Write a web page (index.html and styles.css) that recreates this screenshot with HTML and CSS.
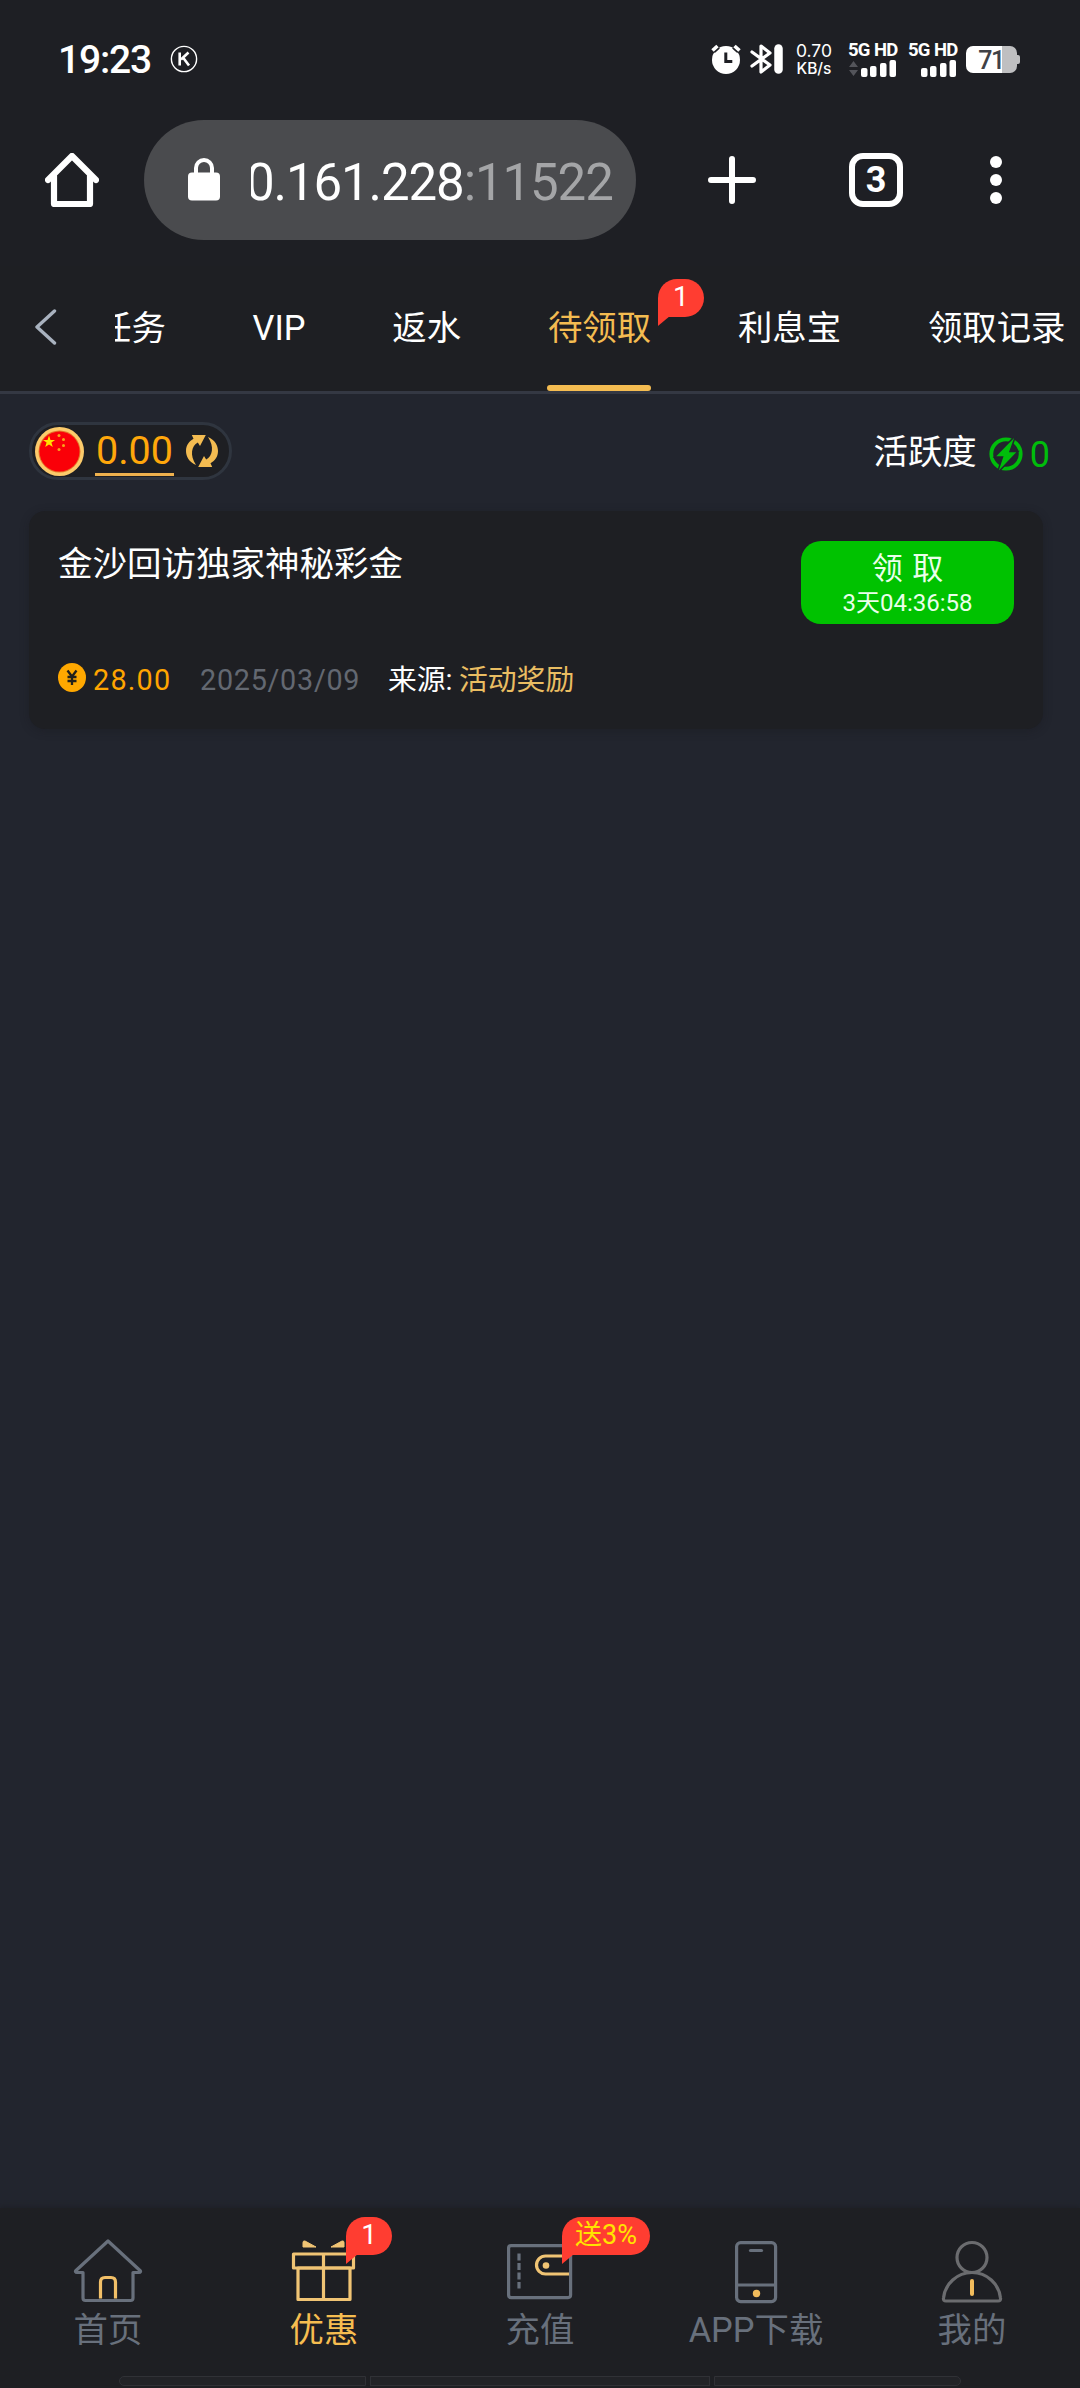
FILE: index.html
```html
<!DOCTYPE html>
<html lang="zh-CN">
<head>
<meta charset="utf-8">
<title>待领取</title>
<link rel="stylesheet" href="styles.css">
</head>
<body>
<div class="screen">
  <header class="status">
    <span class="clock">19:23</span>
    <svg class="k-icon" width="28" height="28" viewBox="0 0 28 28" fill="none" stroke="#fff"><circle cx="14" cy="14" r="12.6" stroke-width="1.4"/><path d="M9.7 7.5v13M18.5 7.5l-7.5 7M13 12.5l6 8" stroke-width="2.6"/></svg>
    <div class="status-right">
      <svg class="alarm" width="30" height="30" viewBox="0 0 30 30"><circle cx="15" cy="16" r="14" fill="#fff"/><path d="M1.5 6.500L6.500 2M28.500 6.500L23.500 2" stroke="#1e1f24" stroke-width="7"/><path d="M1.5 6.500L6.500 2M28.500 6.500L23.500 2" stroke="#fff" stroke-width="3.600"/><path d="M14.800 8.500v9h6.500" fill="none" stroke="#1e1f24" stroke-width="3"/></svg>
      <svg class="bluetooth" width="33" height="30" viewBox="0 0 33 30" fill="none" stroke="#fff" stroke-width="3.200" stroke-linecap="round" stroke-linejoin="round"><path d="M2 8l18 13-9 7V2l9 7L2 22"/><path d="M28.500 4.500v21" stroke-width="8.500"/></svg>
      <div class="speed"><span class="speed-num">0.70</span><span class="speed-unit">KB/s</span></div>
      <div class="signal"><span>5G HD</span><svg width="48" height="17" viewBox="0 0 48 17"><path d="M1 7l4.500-6L10 7zM1 10l4.500 6L10 10z" fill="#53545a"/><g fill="#fff"><rect x="13" y="8" width="6.500" height="9" rx="2"/><rect x="22" y="6" width="6.500" height="11" rx="2"/><rect x="32" y="3" width="6.500" height="14" rx="2"/><rect x="41.500" y="0" width="6.500" height="17" rx="2"/></g></svg></div>
      <div class="signal signal-two"><span>5G HD</span><svg width="48" height="17" viewBox="0 0 48 17" fill="#fff"><rect x="13" y="8" width="6.500" height="9" rx="2"/><rect x="22" y="6" width="6.500" height="11" rx="2"/><rect x="32" y="3" width="6.500" height="14" rx="2"/><rect x="41.500" y="0" width="6.500" height="17" rx="2"/></svg></div>
      <div class="battery">71</div>
    </div>
  </header>

  <div class="browser">
    <svg class="home" width="54" height="54" viewBox="0 0 54 54" fill="none" stroke="#fff" stroke-width="6.200" stroke-linecap="round" stroke-linejoin="round"><path d="M3 27L27 3l24 24"/><path d="M9 23v28h36V23"/></svg>
    <div class="url">
      <svg class="lock" width="32" height="43" viewBox="0 0 32 43"><rect y="14.500" width="32" height="28" rx="4" fill="#fff"/><path d="M8 16v-6a8 8 0 0 1 16 0v6" fill="none" stroke="#fff" stroke-width="4"/></svg>
      <div class="address"><span class="host">0.161.228</span><span class="port">:11522</span></div>
    </div>
    <svg class="plus" width="48" height="48" viewBox="0 0 48 48" stroke="#fff" stroke-width="6" stroke-linecap="round"><path d="M24 3v42M3 24h42"/></svg>
    <div class="tab-count">3</div>
    <svg class="dots" width="12" height="48" viewBox="0 0 12 48" fill="#fff"><circle cx="6" cy="6" r="6"/><circle cx="6" cy="24" r="6"/><circle cx="6" cy="42" r="6"/></svg>
  </div>

  <nav class="tabs">
    <svg class="back" width="22" height="36" viewBox="0 0 22 36" fill="none" stroke="#a9b2bf" stroke-width="3.400" stroke-linecap="round" stroke-linejoin="round"><path d="M19.500 2L2 18l17.500 16"/></svg>
    <div class="tab-scroll">
      <span class="tab">任务</span>
      <span class="tab">VIP</span>
      <span class="tab">返水</span>
      <span class="tab active">待领取<b class="badge">1</b></span>
      <span class="tab">利息宝</span>
      <span class="tab">领取记录</span>
    </div>
  </nav>

  <main class="content">
    <div class="wallet-row">
      <div class="balance">
        <svg class="flag" width="49" height="49" viewBox="0 0 49 49"><circle cx="24.500" cy="24.500" r="24.500" fill="#fccb6b"/><circle cx="24.500" cy="24.500" r="21" fill="#e5752b"/><circle cx="24.500" cy="24.500" r="20" fill="#fa0008"/><path d="M14 8.500l1.500 4.400h4.600l-3.700 2.700 1.400 4.500-3.800-2.700-3.800 2.700 1.400-4.500-3.700-2.700h4.600z" fill="#ffe100"/><g fill="#f8a51b"><circle cx="24" cy="8.500" r="1.500"/><circle cx="28.500" cy="12.500" r="1.500"/><circle cx="28.500" cy="18.500" r="1.500"/><circle cx="24" cy="22.500" r="1.500"/></g></svg>
        <span class="amount">0.00</span>
        <svg class="refresh" width="32" height="34" viewBox="0 0 32 34" fill="#f4bc51"><path d="M10 31C3 28 0 22.500 0 17 0 11 3.500 7 7.500 4.800L5.800 1h14L14 12l-2.200-3.500C5.500 12 3.500 21 10 31z"/><path d="M22 3c7 3 10 8.500 10 14 0 6-3.500 10-7.500 12.200L26.200 33h-14L18 22l2.200 3.500C26.500 22 28.500 13 22 3z"/></svg>
      </div>
      <div class="activity"><span>活跃度</span><svg width="34" height="36" viewBox="0 0 34 36"><circle cx="17" cy="18" r="14.700" fill="none" stroke="#00bd0b" stroke-width="3.800"/><path d="M27 -1L5.500 21h8L8 37.500l21-22h-8z" fill="#00bd0b" stroke="#22252e" stroke-width="1.500"/></svg><span class="activity-num">0</span></div>
    </div>

    <section class="card">
      <div class="card-top">
        <h1>金沙回访独家神秘彩金</h1>
        <button class="claim"><span class="claim-title">领 取</span><span class="claim-time">3天04:36:58</span></button>
      </div>
      <div class="card-meta">
        <svg class="coin" width="28" height="29" viewBox="0 0 28 29"><ellipse cx="14" cy="14.500" rx="14" ry="14.500" fill="#ffa800"/><path d="M9.500 7.500l4.500 6 4.500-6M9.500 14h9M9.500 18h9M14 13.500V22" fill="none" stroke="#22201b" stroke-width="2.300"/></svg>
        <span class="bonus">28.00</span>
        <span class="date">2025/03/09</span>
        <span class="source">来源:</span>
        <span class="source-name">活动奖励</span>
      </div>
    </section>
  </main>

  <footer class="dock">
    <div class="dock-items">
      <div class="dock-item">
        <svg width="72" height="66" viewBox="0 0 72 66" fill="none" stroke="#68707c" stroke-width="3.200" stroke-linejoin="round" stroke-linecap="round"><path d="M36 3L4 32.500c-1 1-.5 2 1 2h6V60q0 2.500 2.500 2.500h45Q61 62.500 61 60V34.500h6c1.500 0 2-1 1-2z"/><path d="M28.500 60.500V44q0-4.500 4.500-4.500h6q4.500 0 4.500 4.500v16.500" stroke="#f2c068" stroke-linecap="butt"/></svg>
        <span>首页</span>
      </div>
      <div class="dock-item selected">
        <svg width="72" height="66" viewBox="0 0 72 66" fill="none" stroke="#f0c474" stroke-width="3.200" stroke-linejoin="round"><rect x="5.500" y="16" width="60" height="14"/><path d="M10 30h52v31.500H10zM35.500 16v45"/><path d="M15 9V4.500q0-2 2-1.500l11 6zM56 9V4.500q0-2-2-1.500L43 9z" fill="#f0c474" stroke-width="1"/></svg>
        <span>优惠</span><b class="badge">1</b>
      </div>
      <div class="dock-item">
        <svg width="72" height="66" viewBox="0 0 72 66" fill="none" stroke="#68707c" stroke-width="3.200"><rect x="4.600" y="7.600" width="62" height="52" rx="2.500"/><path d="M15 15.500v35" stroke-dasharray="7 2.500"/><path d="M65 36H41.500a9 9 0 0 1 0-18H65" stroke="#f0c474"/><circle cx="42" cy="27.500" r="3.300" fill="#f0c474" stroke="none"/></svg>
        <span>充值</span><b class="badge promo">送3%</b>
      </div>
      <div class="dock-item">
        <svg width="72" height="66" viewBox="0 0 72 66" fill="none" stroke="#68707c" stroke-width="3.200"><rect x="16.600" y="4.600" width="39" height="59" rx="4"/><path d="M17 47h38"/><path d="M30.500 12.500h11" stroke-linecap="round"/><circle cx="36.500" cy="55.500" r="3.700" fill="#f2bc5c" stroke="none"/></svg>
        <span>APP下载</span>
      </div>
      <div class="dock-item">
        <svg width="72" height="66" viewBox="0 0 72 66" fill="none" stroke="#6b6c6f" stroke-width="3.200" stroke-linejoin="round"><circle cx="36" cy="19.500" r="15"/><path d="M10 63q-3 0-2.500-3C9 46 21 34.500 36 34.500S63 46 64.500 60q.5 3-2.500 3z"/><path d="M36 43v13" stroke="#f2bc5c" stroke-width="4" stroke-linecap="round"/></svg>
        <span>我的</span>
      </div>
    </div>
    <div class="gesture"><i></i><i></i><i></i></div>
  </footer>
</div>
</body>
</html>
```

FILE: styles.css
```css
* { box-sizing: border-box; }
body { margin: 0; background: #22252e; }
svg { display: block; flex: none; }
.screen {
  width: 1080px;
  height: 2388px;
  display: flex;
  flex-direction: column;
  overflow: hidden;
  background: #22252e;
  color: #fff;
  font-family: Roboto, "Noto Sans CJK SC", sans-serif;
  font-size: 34.4px;
  line-height: 1;
  white-space: nowrap;
}

/* status bar */
.status { height: 118px; display: flex; align-items: center; background: #1e1f24; padding-left: 58px; }
.clock { width: 112px; padding-top: 2px; font-size: 39px; font-weight: 500; letter-spacing: -1.2px; }
.k-icon { margin-top: -1px; }
.status-right { display: flex; align-items: center; margin-left: 513px; }
.bluetooth { margin-left: 9px; }
.speed { width: 52px; margin-left: 5px; display: flex; flex-direction: column; align-items: center; gap: 1px; font-family: Inter, sans-serif; }
.speed-num { font-size: 17.500px; }
.speed-unit { font-size: 15.500px; font-weight: 500; }
.signal { width: 48px; margin-left: 8px; display: flex; flex-direction: column; gap: 1px; font-size: 18.500px; font-weight: 700; letter-spacing: -.9px; word-spacing: 1px; }
.signal-two { margin-left: 12px; }
.battery {
  width: 51px; height: 27px; margin-left: 10px; padding-right: 1px;
  position: relative; border-radius: 7px;
  background: linear-gradient(90deg, #fff 36px, #bfbfc1 36px);
  color: #404146; font-size: 25px; font-weight: 500; line-height: 29px; text-align: center; letter-spacing: -1.500px;
}
.battery::after { content: ""; position: absolute; left: 51px; top: 9px; width: 3px; height: 9px; border-radius: 0 2px 2px 0; background: #bfbfc1; }

/* browser bar */
.browser { height: 148px; padding: 2px 0 26px 45px; display: flex; align-items: center; background: #1e1f24; }
.url { width: 492px; height: 120px; margin-left: 45px; padding-left: 44px; display: flex; align-items: center; border-radius: 60px; background: #4a4b4e; }
.lock { margin-top: -2px; }
.address { width: 370px; margin-left: 31px; overflow: hidden; font-size: 51px; line-height: 60px; padding-top: 6px; text-indent: -5px; letter-spacing: -1.100px; }
.port { color: #a4a5a7; }
.plus { margin-left: 72px; }
.tab-count { width: 54px; height: 54px; margin-left: 93px; border: 6px solid #fff; border-radius: 14px; font-size: 36px; font-weight: 700; line-height: 43px; text-align: center; }
.dots { margin-left: 87px; }

/* section tabs */
.tabs { height: 128px; padding-left: 35px; display: flex; align-items: center; background: #1e1f23; border-bottom: 3px solid #343843; }
.back { margin-top: -3px; }
.tab-scroll { height: 125px; margin-left: 58px; flex: 1; display: flex; gap: 86.800px; overflow: hidden; }
.tab { position: relative; flex: none; line-height: 124px; height: 125px; }
.tab:first-child { margin-left: -18px; }
.tab.active { color: #f4bc51; }
.tab.active::after { content: ""; position: absolute; left: -1px; right: 0; bottom: 0; height: 6px; border-radius: 3px; background: #f4bc51; }
.badge {
  position: absolute; left: 110px; top: 13px; width: 46px; height: 38px;
  border-radius: 19px 19px 19px 0; background: #ff3d31; color: #fff;
  font-size: 28px; font-weight: 400; line-height: 36px; text-align: center;
}
.badge::after { content: ""; position: absolute; left: 0; top: 37px; width: 12px; height: 10px; background: #ff3d31; clip-path: polygon(0 0, 100% 0, 0 100%); }

/* balance */
.content { flex: 1; padding: 28px 29px 0; }
.wallet-row { height: 58px; display: flex; justify-content: space-between; align-items: center; }
.balance { width: 203px; height: 58px; padding-left: 3px; display: flex; align-items: center; border: 3px solid #2f353f; border-radius: 29px; background: #1e1f23; }
.amount { margin-left: 11px; width: 79px; height: 46px; margin-top: 3px; border-bottom: 3px solid #eeb14e; color: #ffa70b; font-size: 39.500px; line-height: 42px; text-align: center; }
.refresh { margin-left: 12px; }
.activity { display: flex; align-items: center; margin-right: 1px; }
.activity > span:first-child { padding-top: 2px; }
.activity svg { margin: 6px 7px 0 12px; }
.activity-num { padding-top: 8px; color: #00bd0b; font-size: 36px; }

/* reward card */
.card { width: 1014px; height: 218px; margin-top: 31px; padding: 30px 29px 0; border-radius: 16px; background: #1e1f23; box-shadow: 0 2px 9px rgba(22, 24, 30, .35); }
.card-top { display: flex; justify-content: space-between; }
.card h1 { margin: 6px 0 0; font-size: 34.500px; font-weight: 400; line-height: 34px; }
.claim { width: 213px; height: 83px; padding: 0; display: flex; flex-direction: column; align-items: center; border: 0; border-radius: 20px; background: #00c200; color: #eaffea; font-family: inherit; }
.claim-title { margin-top: 10px; font-size: 31px; line-height: 36px; word-spacing: 2px; }
.claim-time { margin-top: 2px; font-size: 24px; line-height: 28px; }
.card-meta { display: flex; align-items: center; margin-top: 35px; height: 40px; font-size: 28.800px; }
.card-meta span { padding-top: 2px; }
.coin { margin-top: -3px; }
.bonus { width: 107px; margin-left: 7px; color: #ffa500; letter-spacing: 1.200px; }
.date { width: 188px; color: #636871; letter-spacing: .7px; }
.source { width: 71px; }
.source-name { color: #e9bd62; }

/* bottom navigation */
.dock { height: 180px; background: #1e1f23; box-shadow: 0 -1px 5px rgba(25, 26, 31, .6); }
.dock-items { display: grid; grid-template-columns: repeat(5, 216px); height: 168px; padding-top: 30px; }
.dock-item { position: relative; display: flex; flex-direction: column; align-items: center; color: #68707c; }
.dock-item > span { margin-top: 7px; line-height: 38px; }
.dock-item.selected { color: #f6bd50; }
.dock .badge { left: 130px; top: -21px; }
.dock .promo { width: 88px; color: #ffe400; font-size: 27px; }
.gesture { display: grid; grid-template-columns: 247px 340px 247px; gap: 4px; justify-content: center; height: 10px; }
.gesture i { border: 1px solid #303136; background: #222327; }
.gesture i:first-child { border-radius: 5px 0 0 5px; }
.gesture i:last-child { border-radius: 0 5px 5px 0; }
```
